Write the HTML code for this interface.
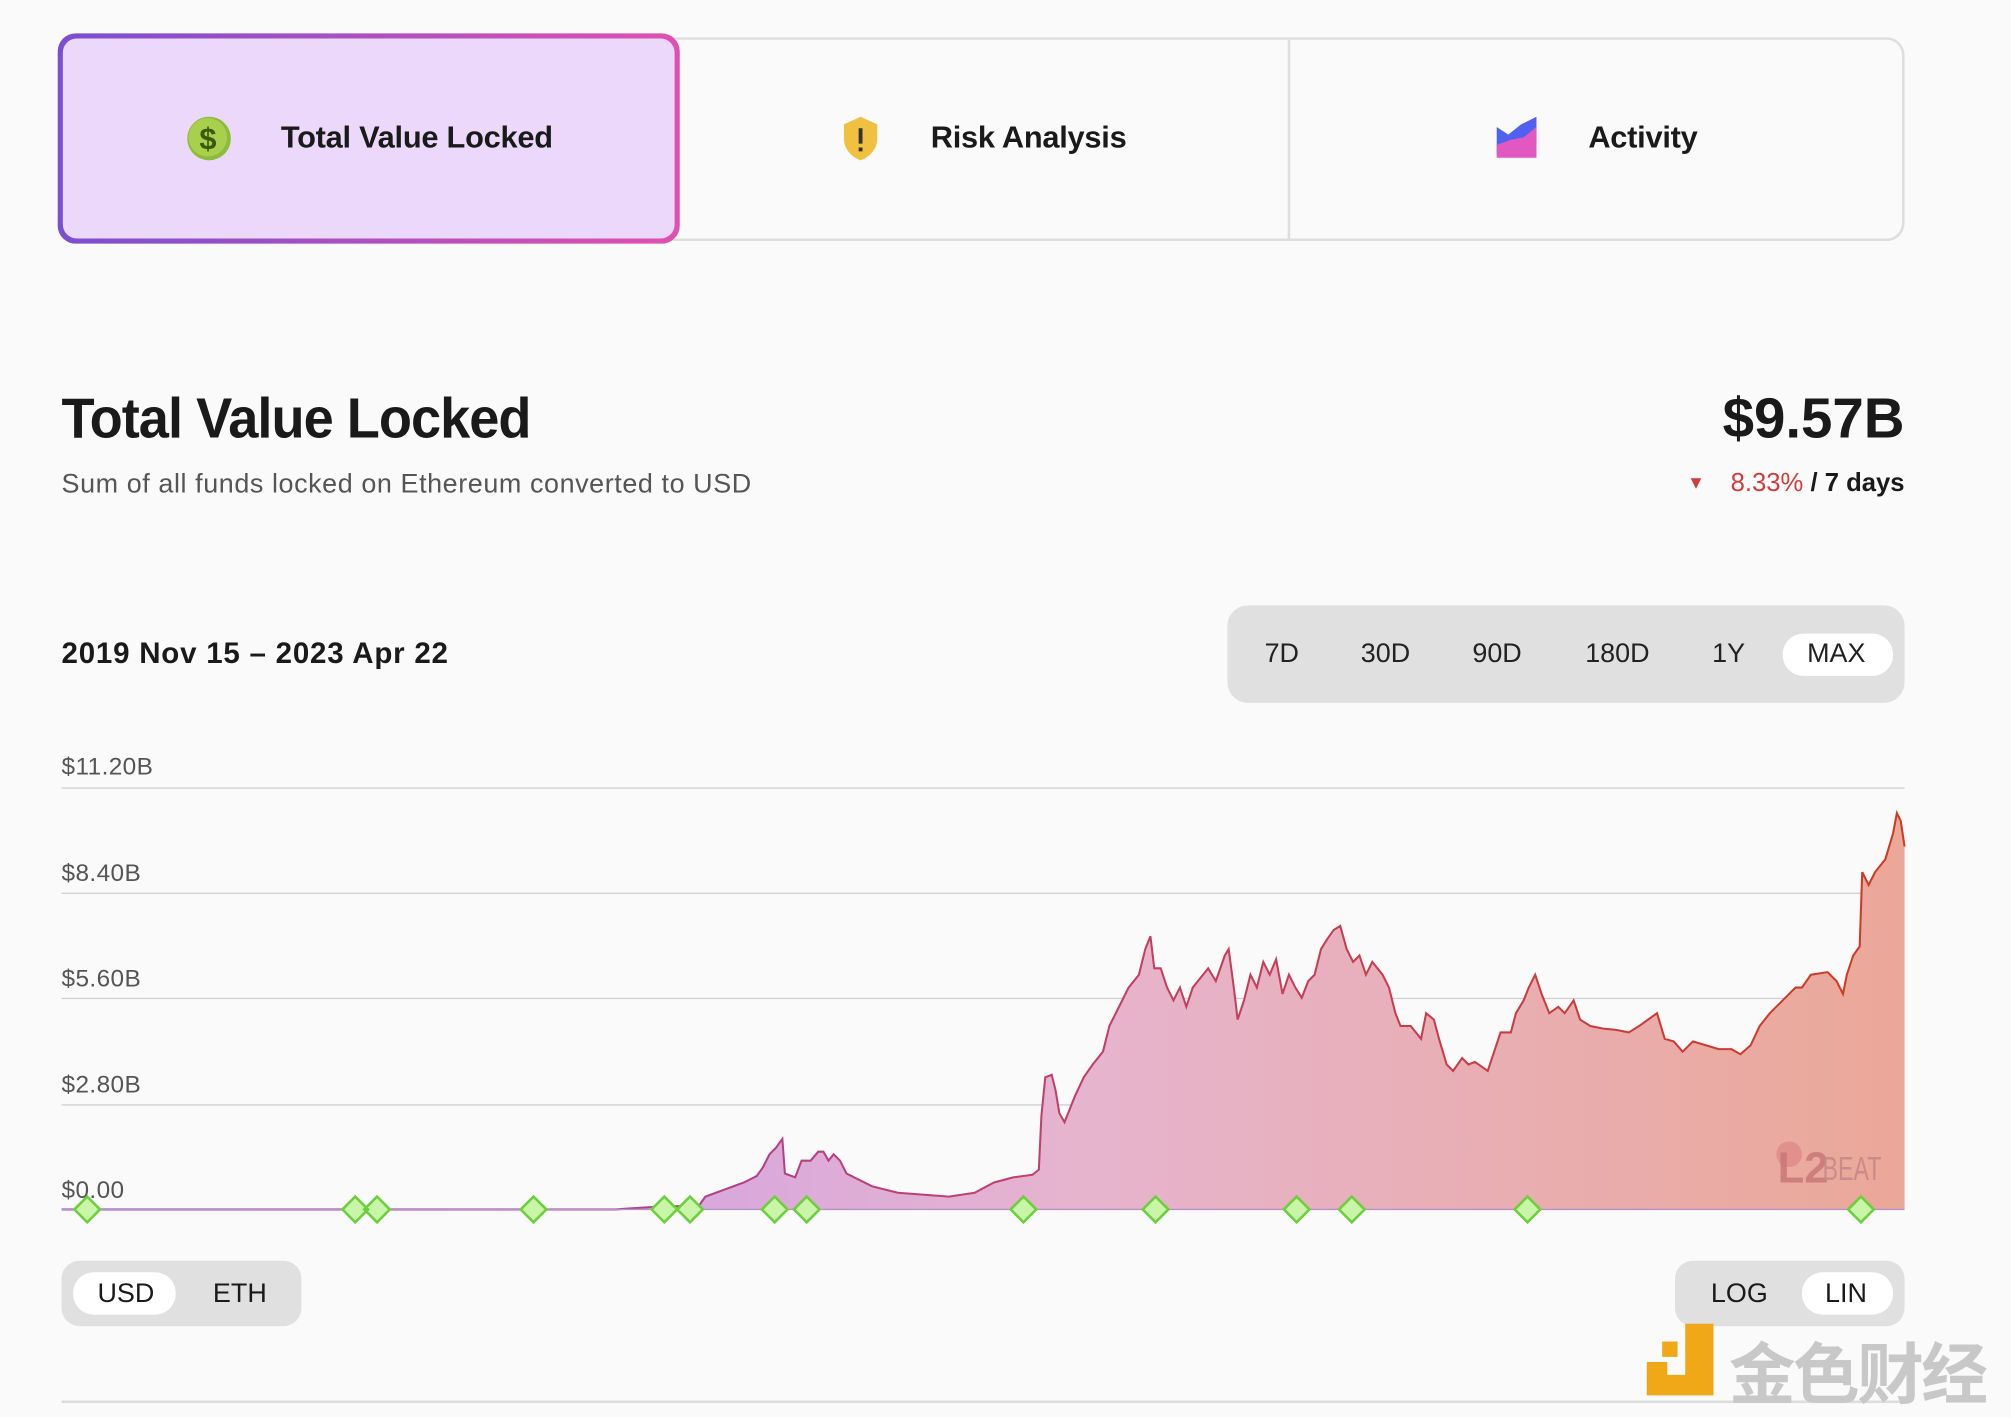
<!DOCTYPE html>
<html><head><meta charset="utf-8"><style>
html,body{margin:0;padding:0;background:#fafafa;width:2011px;height:1409px;overflow:hidden}
#w{position:absolute;left:0;top:0;width:1568px;height:1099px;transform:scale(1.28253);transform-origin:0 0;font-family:"Liberation Sans",sans-serif;color:#1a1a1a}
.a{position:absolute}
.tab{position:absolute;top:29px;height:158px;display:flex;align-items:center;justify-content:center;font-size:24px;font-weight:bold;letter-spacing:-0.2px}
.gl{position:absolute;left:48px;width:1437px;height:1px;background:#cfcfcf}
.yl{position:absolute;left:48px;font-size:19px;color:#555;letter-spacing:0.3px}
.tf{position:absolute;top:498px;font-size:21px;color:#222}
</style></head><body><div id="w">
<div class="a" style="left:520px;top:29px;width:963px;height:155px;border:2px solid #dedede;border-left:none;border-radius:0 14px 14px 0"></div>
<div class="a" style="left:1004px;top:31px;width:2px;height:155px;background:#dedede"></div>
<div class="a" style="left:45px;top:26px;width:485px;height:164px;border-radius:14px;background:linear-gradient(90deg,#7a4fd0,#e050b0)"></div>
<div class="a" style="left:49px;top:30px;width:477px;height:156px;border-radius:11px;background:#ecd8fb"></div>
<div class="tab" style="left:47px;width:482px"><svg width="36" height="36" viewBox="0 0 36 36" style="margin-right:38px"><circle cx="18" cy="18" r="17" fill="#8cbd3a"/><circle cx="17" cy="17" r="15" fill="#a8d04c"/><text x="17" y="26" font-size="24" font-weight="bold" text-anchor="middle" fill="#3b5a10" font-family="Liberation Sans">$</text></svg>Total Value Locked</div>
<div class="tab" style="left:529px;width:476px"><svg width="30" height="36" viewBox="0 0 30 36" style="margin-right:40px"><path d="M15 1 L28 7 V18 C28 27 21 33 15 35 C9 33 2 27 2 18 V7 Z" fill="#f0c040"/><rect x="13.5" y="10" width="3" height="12" fill="#333"/><rect x="13.5" y="25" width="3" height="3" fill="#333"/></svg>Risk Analysis</div>
<div class="tab" style="left:1005px;width:480px"><svg width="34" height="34" viewBox="0 0 34 34" style="margin-right:38px"><path d="M1 8 L10 14 L20 6 L32 0 V20 L18 22 L1 30 Z" fill="#5060f0"/><path d="M1 22 L12 18 L22 16 L32 8 V32 H1 Z" fill="#e058c0"/></svg>Activity</div>
<div class="a" style="left:48px;top:302px;font-size:44px;font-weight:bold;letter-spacing:-0.8px;transform:scaleX(0.96);transform-origin:0 0">Total Value Locked</div>
<div class="a" style="left:48px;top:366px;font-size:21px;color:#555;letter-spacing:0.45px">Sum of all funds locked on Ethereum converted to USD</div>
<div class="a" style="right:83px;top:302px;font-size:44px;font-weight:bold">$9.57B</div>
<div class="a" style="right:83px;top:366px;font-size:20px;font-weight:bold"><span style="color:#d23b3b;font-size:14px;margin-right:20px;position:relative;top:-2px">&#9660;</span><span style="color:#d23b3b;font-weight:normal">8.33%</span> / 7 days</div>
<div class="a" style="left:48px;top:496px;font-size:23px;font-weight:bold;letter-spacing:0.6px">2019 Nov 15 – 2023 Apr 22</div>
<div class="a" style="left:957px;top:472px;width:528px;height:76px;background:#e0e0e0;border-radius:16px"></div>
<div class="a" style="left:1390px;top:494px;width:86px;height:33px;background:#fff;border-radius:16px"></div>
<div class="tf" style="left:986px">7D</div><div class="tf" style="left:1061px">30D</div><div class="tf" style="left:1148px">90D</div><div class="tf" style="left:1236px">180D</div><div class="tf" style="left:1335px">1Y</div><div class="tf" style="left:1409px">MAX</div>
<div class="gl" style="top:614px"></div><div class="gl" style="top:696px"></div><div class="gl" style="top:778px"></div><div class="gl" style="top:861px"></div>
<div class="yl" style="top:588px">$11.20B</div><div class="yl" style="top:671px">$8.40B</div><div class="yl" style="top:753px">$5.60B</div><div class="yl" style="top:836px">$2.80B</div><div class="yl" style="top:918px">$0.00</div>
<svg class="a" style="left:0;top:0" width="1568" height="1099">
<defs>
<linearGradient id="f" x1="0" x2="1"><stop offset="0.35" stop-color="#d9a8dc"/><stop offset="0.55" stop-color="#e6b4ce"/><stop offset="1" stop-color="#eba898"/></linearGradient>
<linearGradient id="s" x1="0" x2="1"><stop offset="0" stop-color="#9040c0"/><stop offset="0.5" stop-color="#c04070"/><stop offset="1" stop-color="#d03a20"/></linearGradient>
</defs>
<path id="p" d="M48 943 L480 943 510 941 545 940 550 933 580 922 590 917 595 910 600 900 605 895 610 888 612 915 620 918 625 905 632 905 638 898 642 898 646 905 650 900 655 905 660 915 670 920 680 925 700 930 740 933 760 930 775 922 790 918 805 916 810 912 812 870 815 840 820 838 823 850 826 868 830 875 838 855 845 840 852 830 860 820 865 800 870 790 875 780 880 770 888 760 893 740 897 730 900 755 905 755 910 770 915 780 920 770 925 785 930 770 938 760 942 755 948 765 955 745 958 740 962 770 965 795 970 780 975 760 980 770 985 750 990 760 995 748 1000 775 1005 760 1010 770 1015 778 1020 765 1025 760 1030 740 1035 732 1040 725 1045 722 1050 740 1055 750 1060 745 1065 760 1070 750 1078 760 1083 770 1088 790 1092 800 1100 800 1108 810 1112 790 1118 795 1122 810 1128 830 1133 835 1140 825 1145 830 1150 828 1160 835 1165 820 1170 805 1178 805 1182 790 1188 780 1192 770 1197 760 1202 775 1208 790 1215 785 1220 790 1227 780 1232 795 1240 800 1250 802 1260 803 1270 805 1278 800 1285 795 1292 790 1298 810 1305 812 1312 820 1320 812 1330 815 1340 818 1350 818 1357 822 1365 815 1372 800 1380 790 1388 782 1395 775 1400 770 1405 770 1412 760 1425 758 1432 765 1437 775 1440 760 1445 745 1450 738 1452 680 1457 690 1462 680 1470 670 1476 650 1479 634 1482 640 1485 660" fill="none"/>
<path d="M48 943 L480 943 510 941 545 940 550 933 580 922 590 917 595 910 600 900 605 895 610 888 612 915 620 918 625 905 632 905 638 898 642 898 646 905 650 900 655 905 660 915 670 920 680 925 700 930 740 933 760 930 775 922 790 918 805 916 810 912 812 870 815 840 820 838 823 850 826 868 830 875 838 855 845 840 852 830 860 820 865 800 870 790 875 780 880 770 888 760 893 740 897 730 900 755 905 755 910 770 915 780 920 770 925 785 930 770 938 760 942 755 948 765 955 745 958 740 962 770 965 795 970 780 975 760 980 770 985 750 990 760 995 748 1000 775 1005 760 1010 770 1015 778 1020 765 1025 760 1030 740 1035 732 1040 725 1045 722 1050 740 1055 750 1060 745 1065 760 1070 750 1078 760 1083 770 1088 790 1092 800 1100 800 1108 810 1112 790 1118 795 1122 810 1128 830 1133 835 1140 825 1145 830 1150 828 1160 835 1165 820 1170 805 1178 805 1182 790 1188 780 1192 770 1197 760 1202 775 1208 790 1215 785 1220 790 1227 780 1232 795 1240 800 1250 802 1260 803 1270 805 1278 800 1285 795 1292 790 1298 810 1305 812 1312 820 1320 812 1330 815 1340 818 1350 818 1357 822 1365 815 1372 800 1380 790 1388 782 1395 775 1400 770 1405 770 1412 760 1425 758 1432 765 1437 775 1440 760 1445 745 1450 738 1452 680 1457 690 1462 680 1470 670 1476 650 1479 634 1482 640 1485 660 L1485 943 Z" fill="url(#f)"/>
<use href="#p" stroke="url(#s)" stroke-width="1.6"/>
<line x1="48" y1="943" x2="1485" y2="943" stroke="#b890c8" stroke-width="1"/>
<circle cx="1395" cy="900" r="10" fill="#e08a8a" opacity="0.8"/>
<text x="1386" y="922" font-size="34" font-family="Liberation Sans" fill="#c87878" font-weight="bold" opacity="0.85">L2</text>
<text x="1421" y="920" font-size="26" fill="#c88888" font-family="Liberation Sans" opacity="0.9" textLength="46" lengthAdjust="spacingAndGlyphs">BEAT</text>
<g fill="#c8f5a8" stroke="#6ccf3c" stroke-width="2">
<path d="M68 933 l10 10 -10 10 -10 -10Z M277 933 l10 10 -10 10 -10 -10Z M294 933 l10 10 -10 10 -10 -10Z M416 933 l10 10 -10 10 -10 -10Z M518 933 l10 10 -10 10 -10 -10Z M538 933 l10 10 -10 10 -10 -10Z M604 933 l10 10 -10 10 -10 -10Z M629 933 l10 10 -10 10 -10 -10Z M798 933 l10 10 -10 10 -10 -10Z M901 933 l10 10 -10 10 -10 -10Z M1011 933 l10 10 -10 10 -10 -10Z M1054 933 l10 10 -10 10 -10 -10Z M1191 933 l10 10 -10 10 -10 -10Z M1451 933 l10 10 -10 10 -10 -10Z"/>
</g>
</svg>
<div class="a" style="left:48px;top:983px;width:187px;height:51px;background:#e0e0e0;border-radius:14px"></div>
<div class="a" style="left:57px;top:992px;width:80px;height:33px;background:#fff;border-radius:16px"></div>
<div class="a" style="left:76px;top:997px;font-size:21px">USD</div><div class="a" style="left:166px;top:997px;font-size:21px">ETH</div>
<div class="a" style="left:1306px;top:983px;width:179px;height:51px;background:#e0e0e0;border-radius:14px"></div>
<div class="a" style="left:1405px;top:992px;width:71px;height:33px;background:#fff;border-radius:16px"></div>
<div class="a" style="left:1334px;top:997px;font-size:21px">LOG</div><div class="a" style="left:1423px;top:997px;font-size:21px">LIN</div>
<div class="a" style="left:48px;top:1092px;width:1437px;height:2px;background:#ddd"></div>
<svg class="a" style="left:1282px;top:1032px" width="56" height="58" viewBox="0 0 56 58"><path d="M32 0 H54 V56 H2 V30 H18 V40 H32 Z" fill="#f0a818"/><rect x="14" y="14" width="12" height="12" fill="#f0a818"/></svg>
<div class="a" style="left:1348px;top:1030px;font-size:52px;font-weight:bold;color:#c8c8c8;font-family:'Liberation Sans','Noto Sans CJK SC',sans-serif;letter-spacing:-2px">金色财经</div>
</div></body></html>
